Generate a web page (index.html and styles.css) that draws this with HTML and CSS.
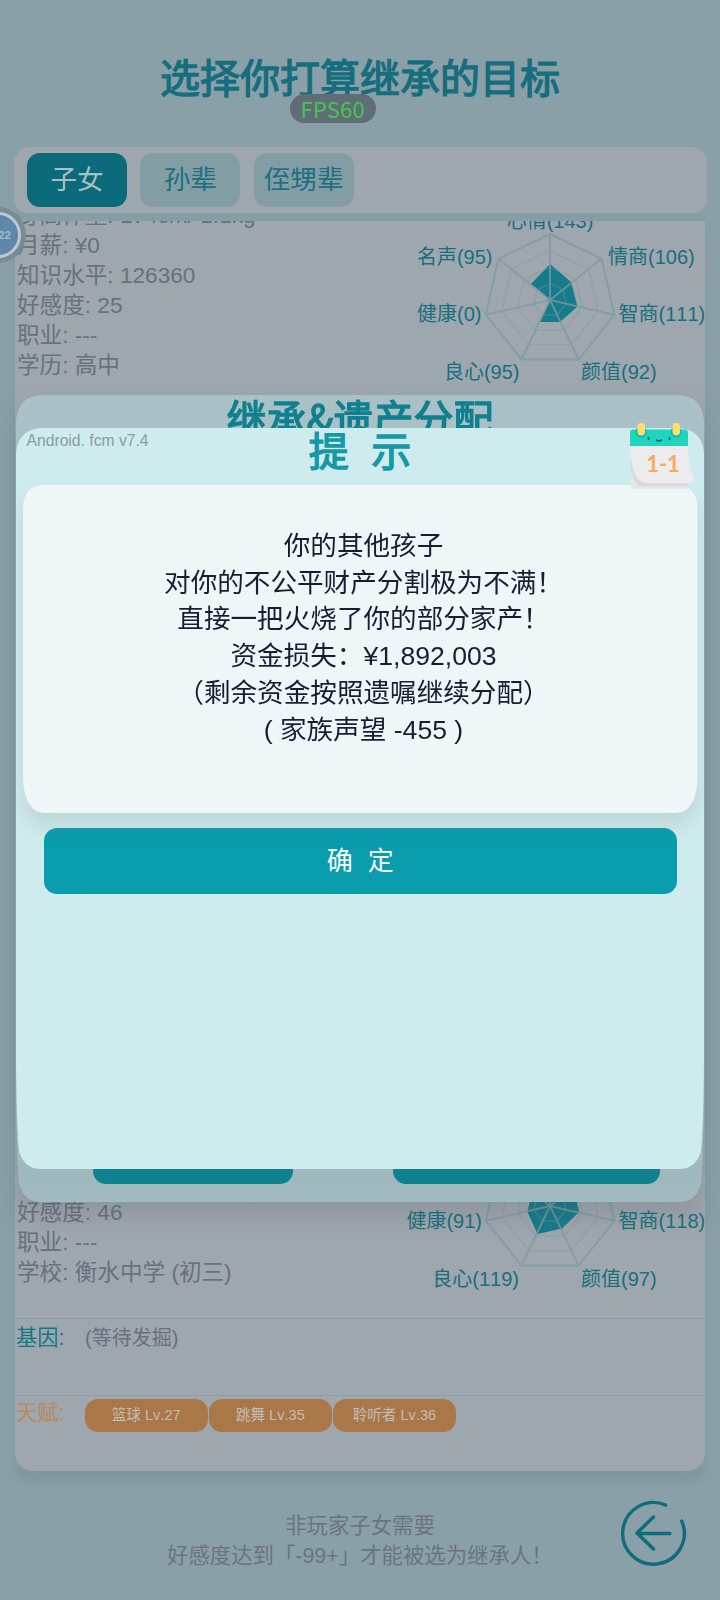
FILE: index.html
```html
<!DOCTYPE html>
<html lang="zh-CN">
<head>
<meta charset="utf-8">
<title>选择你打算继承的目标</title>
<link rel="stylesheet" href="styles.css">
</head>
<body>
<svg class="defs" width="0" height="0" aria-hidden="true">
  <defs>
    <g id="web" fill="none">
      <polygon id="ring" stroke-width="2" points="0,-66 51.6,-41.2 64.3,14.7 28.6,59.5 -28.6,59.5 -64.3,14.7 -51.6,-41.2"/>
      <g class="thin">
        <polygon points="0,-49.5 38.7,-30.9 48.2,11 21.5,44.6 -21.5,44.6 -48.2,11 -38.7,-30.9"/>
        <polygon points="0,-33 25.8,-20.6 32.2,7.4 14.3,29.8 -14.3,29.8 -32.2,7.4 -25.8,-20.6"/>
        <polygon points="0,-16.5 12.9,-10.3 16.1,3.7 7.2,14.9 -7.2,14.9 -16.1,3.7 -12.9,-10.3"/>
      </g>
      <path stroke-width="1.9" d="M0 0V-66M0 0L51.6-41.2M0 0L64.3 14.7M0 0L28.6 59.5M0 0L-28.6 59.5M0 0L-64.3 14.7M0 0L-51.6-41.2"/>
    </g>
  </defs>
</svg>
<div class="screen">
  <header class="header"><h1 class="heading">选择你打算继承的目标</h1></header>
  <nav class="tabs">
    <span class="tab tab-active">子女</span>
    <span class="tab">孙辈</span>
    <span class="tab">侄甥辈</span>
  </nav>
  <main class="list">
    <article class="person person-first">
      <div class="profile">
        <div class="facts">
          <p>身高体重: 174cm/ 1.1kg</p>
          <p>月薪: ¥0</p>
          <p>知识水平: 126360</p>
          <p>好感度: 25</p>
          <p>职业: ---</p>
          <p>学历: 高中</p>
        </div>
        <svg class="radar" width="300" height="190" viewBox="-145 -99 300 190">
          <polygon class="area" points="0,-36 21,-18 27.5,6.5 10,22 -10,22 0,0 -19,-16"/>
          <use href="#web"/>
          <text x="0" y="-72" text-anchor="middle">心情(143)</text>
          <text x="58" y="-36.500">情商(106)</text>
          <text x="68.5" y="21">智商(111)</text>
          <text x="31" y="79">颜值(92)</text>
          <text x="-30.500" y="79" text-anchor="end">良心(95)</text>
          <text x="-68.500" y="21" text-anchor="end">健康(0)</text>
          <text x="-57.500" y="-36.500" text-anchor="end">名声(95)</text>
        </svg>
      </div>
    </article>
    <article class="person">
      <div class="profile profile-second">
        <div class="facts">
          <p>好感度: 46</p>
          <p>职业: ---</p>
          <p>学校: 衡水中学 (初三)</p>
        </div>
        <svg class="radar" width="300" height="190" viewBox="-145 -99 300 190">
          <polygon class="area" points="0,-30 24,-18 29,6 12,22.500 -12.500,28 -22.500,6 -18,-15"/>
          <use href="#web"/>
          <text x="68.5" y="21.500">智商(118)</text>
          <text x="31" y="79.500">颜值(97)</text>
          <text x="-31" y="79.500" text-anchor="end">良心(119)</text>
          <text x="-68" y="21.500" text-anchor="end">健康(91)</text>
        </svg>
      </div>
      <div class="trait"><span class="trait-name">基因:</span><span class="trait-value">(等待发掘)</span></div>
      <div class="trait trait-talent"><span class="trait-name">天赋:</span>
        <div class="chips"><span class="chip">篮球 Lv.27</span><span class="chip">跳舞 Lv.35</span><span class="chip">聆听者 Lv.36</span></div>
      </div>
    </article>
  </main>
  <footer class="footer">
    <div class="hint"><p class="hint-lead">非玩家子女需要</p><p>好感度达到「-99+」才能被选为继承人！</p></div>
    <svg class="back" width="70" height="70" viewBox="-35 -35 70 70">
      <path d="M12.500-28A30.800 30.800 0 1 0 28.700-12"/>
      <path d="M17 .5H-16M.500-16L-16 0L.500 16"/>
    </svg>
  </footer>

  <div class="fps">FPS60</div>
  <div class="bubble">22</div>

  <section class="sheet-wrap sheet-back">
    <div class="sheet">
      <h2 class="sheet-title">继承&amp;遗产分配</h2>
      <div class="sheet-actions"><span class="action action-small"></span><span class="action action-large"></span></div>
    </div>
  </section>

  <section class="sheet-wrap sheet-front">
    <div class="sheet">
      <span class="version">Android. fcm v7.4</span>
      <h2 class="sheet-title prompt-title"><span>提</span><span>示</span></h2>
      <div class="message-shadow">
        <div class="message">
          <p>你的其他孩子</p>
          <p>对你的不公平财产分割极为不满！</p>
          <p>直接一把火烧了你的部分家产！</p>
          <p>资金损失：¥1,892,003</p>
          <p>（剩余资金按照遗嘱继续分配）</p>
          <p>( 家族声望 -455 )</p>
        </div>
      </div>
      <button class="confirm"><span>确</span><span>定</span></button>
    </div>
    <svg class="calendar" width="70" height="70" viewBox="0 0 70 70">
      <path fill="#e3e8ea" d="M2 46Q3 60 13 63H59V66H2Z"/>
      <path fill="#d8dadd" d="M1 26V42Q3 63 14 63.500H59V57H20Z"/>
      <path fill="#ececee" d="M1 20H59Q58 42 66 57Q66 60 61 60H16Q3 58 1 26Z"/>
      <path fill="#20d5bd" d="M1 23V10Q1 6.500 4 6.500H56Q59 6.500 59 10V23Z"/>
      <circle cx="12" cy="9" r="5.500" fill="#12b9ad"/><circle cx="47" cy="9" r="5.500" fill="#12b9ad"/>
      <rect x="8.500" y="0" width="7.500" height="12.500" rx="3.700" fill="#ffe169"/>
      <rect x="43.500" y="0" width="7.500" height="12.500" rx="3.700" fill="#ffe169"/>
      <path d="M19.500 14.500v2M40.500 14.500v2M27.500 17Q30 19 32.500 17" fill="none" stroke="#15545c" stroke-width="1.600" stroke-linecap="round"/>
      <text class="date" x="34" y="49" text-anchor="middle">1-1</text>
    </svg>
  </section>
</div>
</body>
</html>
```
FILE: styles.css
```css
* { box-sizing: border-box; margin: 0; padding: 0; }
body {
  font-family: "Liberation Sans", "Noto Sans CJK SC", sans-serif;
  font-kerning: none;
  background: #8aa0a8;
}
.defs { position: absolute; }
.screen {
  position: relative;
  width: 720px;
  height: 1600px;
  overflow: hidden;
  display: flex;
  flex-direction: column;
  background: #8aa0a8;
}
.header { height: 146.5px; padding-top: 48.500px; text-align: center; }
.heading { font-size: 40px; line-height: 60px; font-weight: 400; color: #156e7d; -webkit-text-stroke: 1.300px #156e7d; }

.tabs {
  height: 67px;
  flex: none;
  margin: 0 13.5px;
  padding: 0 13.500px;
  display: flex;
  align-items: center;
  gap: 13.300px;
  border-radius: 16px;
  background: #9fa7ae;
}
.tab {
  width: 100px;
  height: 53.500px;
  border-radius: 13px;
  background: #839da5;
  color: #1c7080;
  font-size: 26.600px;
  line-height: 54px;
  text-align: center;
}
.tab-active { background: #0c6b7b; color: #a9bfc5; }

.list {
  flex: none;
  height: 1249.500px;
  margin: 7.500px 15px 0;
  border-radius: 0 0 18px 18px;
  background: #9ea6ae;
  box-shadow: 0 -8px 0 #839ea5, 0 12px 8px #8197a0;
  overflow: hidden;
}
.person-first { height: 906px; margin-top: -20.500px; }
.profile { display: flex; justify-content: space-between; height: 211.500px; padding-left: 2px; }
.profile-second .facts { padding-top: 91px; }
.facts { font-size: 22.600px; line-height: 30px; color: #67707d; white-space: nowrap; }
.radar { flex: none; overflow: visible; margin-right: 0; }
.radar text { font-size: 20px; fill: #196f7e; }
.radar .area { fill: #167b8a; }
.radar use { stroke: #7d9aa2; stroke-linejoin: round; opacity: .75; }
.thin { stroke-width: 1.300px; opacity: .55; }

.trait {
  display: flex;
  height: 77px;
  padding-left: 1px;
  border-top: 1px solid #949ca3;
  font-size: 21.200px;
  line-height: 38px;
}
.trait-name { width: 69px; color: #0f7885; }
.trait-value { color: #67707d; font-size: 20px; }
.trait-talent .trait-name { color: #ba895d; line-height: 34px; }
.chips { display: flex; gap: 1.600px; padding-top: 3px; }
.chip {
  width: 122.500px;
  height: 33.300px;
  border-radius: 13px;
  background: #aa7848;
  color: #c5bcb4;
  font-size: 14.600px;
  line-height: 33px;
  text-align: center;
}

.footer { flex: 1; display: flex; justify-content: flex-end; padding: 27.500px 32px 0 0; }
.hint { width: 372px; margin: 12.500px 79px 0 0; text-align: center; font-size: 21.400px; line-height: 30px; color: #6a7480; white-space: nowrap; }
.hint-lead { padding-left: 14px; }
.back { flex: none; }
.back path { fill: none; stroke: #0e6d7a; stroke-width: 3.400px; stroke-linecap: round; stroke-linejoin: round; }

/* Floating system widgets */
.fps {
  position: absolute;
  left: 289.500px;
  top: 94px;
  width: 86.500px;
  height: 29px;
  border-radius: 14.500px;
  background: #606d75;
  color: #43c654;
  font: 400 22px/28px "Noto Sans CJK SC", sans-serif;
  letter-spacing: .2px;
  text-align: center;
}
.bubble {
  position: absolute;
  left: -25px;
  top: 212px;
  width: 46px;
  height: 46px;
  border: 3px solid #b9c9d5;
  border-radius: 50%;
  background: #5e87ab;
  box-shadow: 0 0 0 5px #7c8b92;
  color: #a5bccd;
  font: 700 11.500px/40px "Liberation Sans", sans-serif;
  text-align: right;
  padding-right: 7px;
}

/* Stacked dialogs */
.sheet-wrap { position: absolute; left: 16px; width: 688px; }
.sheet {
  clip-path: path("M0 28C0 10 10 0 28 0H660C678 0 688 10 688 28V620C688 670 686 715 685 723Q680 741 663 741H25Q8 741 3 723C2 715 0 670 0 620Z");
  height: 741px;
  display: flex;
  flex-direction: column;
}
.sheet-back { top: 395px; filter: drop-shadow(0 14px 13px rgba(60, 78, 82, .18)); }
.sheet-back .sheet {
  height: 807px;
  background: linear-gradient(#a8c0c6 85%, #9fb8be 97%, #a2bac1);
  clip-path: path("M0 28C0 10 10 0 28 0H660C678 0 688 10 688 28V686C688 736 686 781 685 789Q680 807 663 807H25Q8 807 3 789C2 781 0 736 0 686Z");
  justify-content: space-between;
}
.sheet-front { top: 428px; }
.sheet-front .sheet { background: #ceebed; }
.sheet-title { text-align: center; font-size: 40px; line-height: 50px; font-weight: 400; color: #10808f; -webkit-text-stroke: 1.400px; }
.sheet-back .sheet-title { font-family: "Noto Sans CJK SC", sans-serif; line-height: 44px; }
.sheet-actions { display: flex; gap: 100px; padding: 0 0 18px 77px; }
.action { height: 60px; border-radius: 13px; background: #10818f; }
.action-small { width: 200px; }
.action-large { width: 267px; }
.version { position: absolute; left: 10.500px; top: 3px; font-size: 15.700px; line-height: 20px; color: #8b9c9f; }
.prompt-title { display: flex; justify-content: center; gap: 22.500px; height: 56.500px; line-height: 49px; color: #1499a5; }
.message-shadow { filter: drop-shadow(0 13px 10px rgba(120, 130, 130, .2)); margin: 0 6.500px 0 7px; }
.message {
  height: 328.500px;
  padding: 43.500px 0 0 6.500px;
  background: #eef6f8;
  clip-path: path("M0 24Q0 0 24 0H650.500Q674.500 0 674.500 24V290Q674.500 328.500 652 328.500H22.500Q0 328.500 0 290Z");
  font-size: 26.600px;
  line-height: 36.700px;
  color: #1a1d31;
  text-align: center;
}
.confirm {
  height: 66.500px;
  margin: 14.500px 27px 0 27.500px;
  border: 0;
  border-radius: 13px;
  background: #089cad;
  color: #fff;
  font: 26px/66px "Liberation Sans", "Noto Sans CJK SC", sans-serif;
  display: flex;
  justify-content: center;
  gap: 15px;
}
.calendar { position: absolute; left: 613px; top: -5px; }
.date { font: 700 22px Lato, sans-serif; fill: #f5aa5a; }
```
